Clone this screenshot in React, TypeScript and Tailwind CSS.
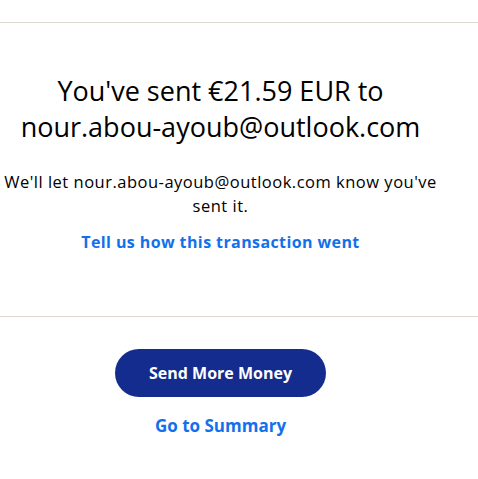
export default function App() {
  return (
    <div className="w-[478px] h-[479px] bg-white text-black" style={{ fontFamily: '"Open Sans", sans-serif' }}>
      <div className="h-[23px] border-b border-[#ddd9d1]" />

      {/* Confirmation */}
      <div className="border-b border-[#ddd9d1]">
        <div className="w-[441px] pt-[50px] pb-[62px] flex flex-col items-center text-center">
          <h1 className="text-[27px] leading-[36px] font-normal">
            You've sent €21.59 EUR to
            <br />
            nour.abou-ayoub@outlook.com
          </h1>
          <p className="mt-[25px] text-[16.5px] leading-[24px] tracking-[0.5px]">
            We'll let nour.abou-ayoub@outlook.com know you've sent it.
          </p>
          <a href="#" className="mt-[12px] text-[16px] leading-[24px] tracking-[0.4px] font-bold text-[#1470ea]">
            Tell us how this transaction went
          </a>
        </div>
      </div>

      {/* Actions */}
      <div className="w-[441px] pt-[32px] flex flex-col items-center">
        <button className="w-[211px] h-[48px] rounded-full bg-[#142c8e] text-white text-[16px] font-bold">
          Send More Money
        </button>
        <a href="#" className="mt-[17px] text-[17px] leading-[24px] font-bold text-[#1470ea]">
          Go to Summary
        </a>
      </div>
    </div>
  )
}
